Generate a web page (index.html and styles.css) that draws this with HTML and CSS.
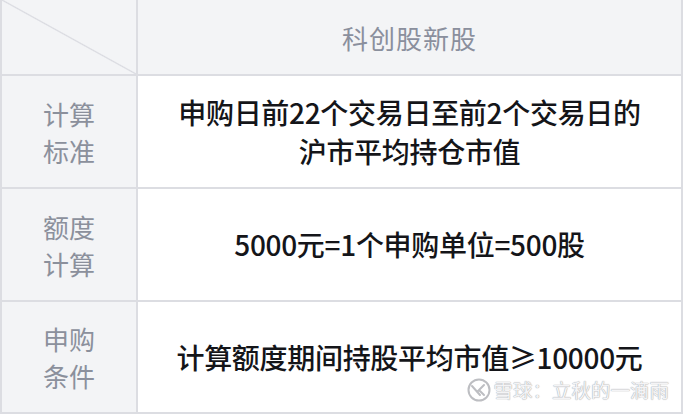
FILE: index.html
```html
<!DOCTYPE html>
<html lang="zh-CN">
<head>
<meta charset="utf-8">
<link rel="stylesheet" href="styles.css">
</head>
<body>
<div class="table">
  <div class="cell corner"></div>
  <div class="cell head">科创股新股</div>
  <div class="cell label">计算<br>标准</div>
  <div class="cell value">申购日前22个交易日至前2个交易日的<br>沪市平均持仓市值</div>
  <div class="cell label">额度<br>计算</div>
  <div class="cell value">5000元=1个申购单位=500股</div>
  <div class="cell label">申购<br>条件</div>
  <div class="cell value last">计算额度期间持股平均市值≥10000元
    <div class="watermark">
      <svg class="logo" width="24" height="24" viewBox="0 0 24 24">
        <circle cx="12" cy="12" r="10.5" fill="none" stroke="#bdbec2" stroke-width="2"/>
        <path d="M5 8 L13 17 M11 13 L17 7 M12 12 L17 17" fill="none" stroke="#bdbec2" stroke-width="2" stroke-linecap="round"/>
      </svg>
      <span>雪球：立秋的一滴雨</span>
    </div>
  </div>
</div>
</body>
</html>
```

FILE: styles.css
```css
html, body {
  margin: 0;
  padding: 0;
  background: #ffffff;
}

body {
  width: 685px;
  height: 417px;
  overflow: hidden;
  font-family: "Noto Sans CJK SC", "Noto Sans", sans-serif;
}

.table {
  width: 683px;
  display: grid;
  grid-template-columns: 134px 1fr;
  grid-template-rows: 74px 111px 111px 110px;
  gap: 2px;
  padding: 0 2px 2px 2px;
  box-sizing: border-box;
  background: #dcdde2;
}

.cell {
  display: flex;
  align-items: center;
  justify-content: center;
  text-align: center;
}

.corner {
  background: linear-gradient(to top right, #f3f4f6 calc(50% - 1.2px), #d9dae0 50%, #f3f4f6 calc(50% + 1.2px));
}

.head {
  background: #f3f4f6;
  color: #8a8f9d;
  font-size: 26px;
  letter-spacing: 1px;
}

.label {
  background: #f3f4f6;
  color: #8b909c;
  font-size: 26px;
  line-height: 37px;
}

.value {
  background: #ffffff;
  color: #141519;
  font-size: 28px;
  font-weight: 500;
  line-height: 39px;
  letter-spacing: -0.3px;
}

.last {
  position: relative;
}

.watermark {
  position: absolute;
  right: 12px;
  bottom: 10px;
  display: flex;
  align-items: center;
  gap: 2px;
  color: #f4f4f6;
  font-size: 19.5px;
  font-weight: 400;
  line-height: 24px;
  letter-spacing: 0;
  text-shadow: 0 0 1px #a9aaae, 0 0 1px #a9aaae;
}

.logo {
  display: block;
}
```
